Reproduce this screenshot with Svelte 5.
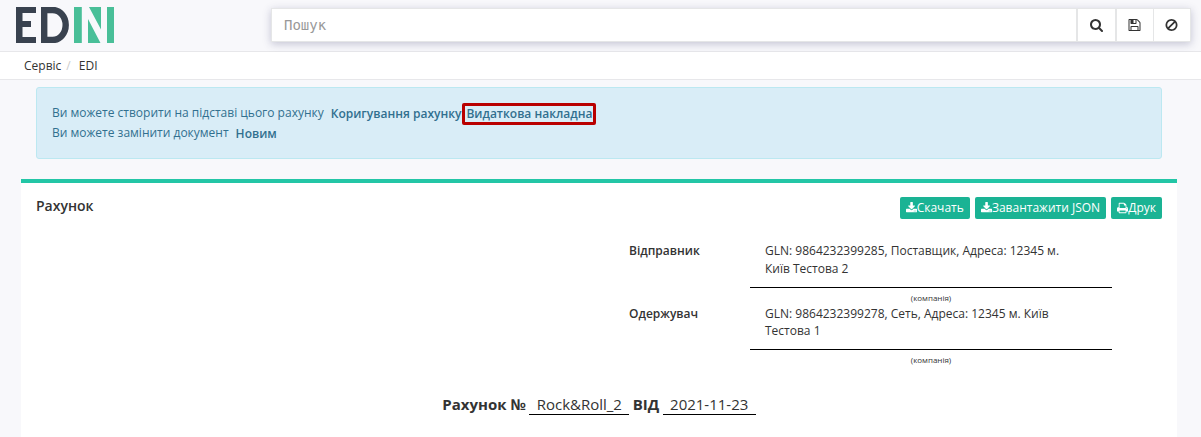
<script>
  const search = "M1216 832q0-185-131.5-316.5t-316.5-131.5-316.5 131.5-131.5 316.5 131.5 316.5 316.5 131.5 316.5-131.5 131.5-316.5zm512 832q0 52-38 90t-90 38q-54 0-90-38l-343-342q-179 124-399 124-143 0-273.5-55.5t-225-150-150-225-55.5-273.5 55.5-273.5 150-225 225-150 273.5-55.5 273.5 55.5 225 150 150 225 55.5 273.5q0 220-124 399l343 343q37 37 37 90z";
  const save = "M512 1536h768v-384h-768v384zm896 0h128v-896q0-14-10-38.5t-20-34.5l-281-281q-10-10-34-20t-39-10v416q0 40-28 68t-68 28h-576q-40 0-68-28t-28-68v-416h-128v1280h128v-416q0-40 28-68t68-28h832q40 0 68 28t28 68v416zm-384-928v-320q0-13-9.5-22.5t-22.5-9.5h-192q-13 0-22.5 9.5t-9.5 22.5v320q0 13 9.5 22.5t22.5 9.5h192q13 0 22.5-9.5t9.5-22.5zm640 32v928q0 40-28 68t-68 28h-1344q-40 0-68-28t-28-68v-1344q0-40 28-68t68-28h928q40 0 88 20t76 48l280 280q28 28 48 76t20 88z";
  const ban = "M1440 893q0-161-87-295l-754 753q137 89 297 89 111 0 211.5-43.5t173.5-116.5 116-174.5 43-212.5zm-999 299l755-754q-135-91-300-91-148 0-273 73t-198 199-73 274q0 162 89 299zm1223-299q0 157-61 300t-163.5 246-245 164-298.5 61-298.5-61-245-164-163.5-246-61-300 61-299.5 163.5-245.5 245-164 298.5-61 298.5 61 245 164 163.5 245.5 61 299.5z";
  const download = "M1344 1344q0-26-19-45t-45-19-45 19-19 45 19 45 45 19 45-19 19-45zm256 0q0-26-19-45t-45-19-45 19-19 45 19 45 45 19 45-19 19-45zm128-224v320q0 40-28 68t-68 28h-1472q-40 0-68-28t-28-68v-320q0-40 28-68t68-28h465l135 136q58 56 136 56t136-56l136-136h464q40 0 68 28t28 68zm-325-569q17 41-14 70l-448 448q-18 19-45 19t-45-19l-448-448q-31-29-14-70 17-39 59-39h256v-448q0-26 19-45t45-19h256q26 0 45 19t19 45v448h256q42 0 59 39z";
  const print = "M448 1536h896v-256h-896v256zm0-640h896v-384h-160q-40 0-68-28t-28-68v-160h-640v640zm1152 64q0-26-19-45t-45-19-45 19-19 45 19 45 45 19 45-19 19-45zm128 0v416q0 13-9.5 22.5t-22.5 9.5h-224v160q0 40-28 68t-68 28h-960q-40 0-68-28t-28-68v-160h-224q-13 0-22.5-9.5t-9.5-22.5v-416q0-79 56.5-135.5t135.5-56.5h64v-544q0-40 28-68t68-28h672q40 0 88 20t76 48l152 152q28 28 48 76t20 88v256h64q79 0 135.5 56.5t56.5 135.5z";
  const actions = [
    { icon: download, label: "Скачать" },
    { icon: download, label: "Завантажити JSON" },
    { icon: print, label: "Друк" },
  ];
  const parties = [
    { role: "Відправник", text: "GLN: 9864232399285, Поставщик, Адреса: 12345 м. Київ Тестова 2" },
    { role: "Одержувач", text: "GLN: 9864232399278, Сеть, Адреса: 12345 м. Київ Тестова 1" },
  ];
</script>

{#snippet icon(d, size)}
  <svg class="icon" width={size * 13 / 14} height={size} viewBox="64 0 1664 1792" fill="currentColor" aria-hidden="true"><path {d} /></svg>
{/snippet}

<div class="page">
  <header class="top">
    <svg class="logo" width="98" height="36" viewBox="0 0 98 36" aria-hidden="true">
      <g fill="#39424f">
        <rect width="6.500" height="36" />
        <rect width="20" height="6" />
        <rect y="14" width="15" height="6" />
        <rect y="30" width="20" height="6" />
      </g>
      <path d="M28.200 3h8.500a13 15 0 0 1 0 30h-8.500z" fill="none" stroke="#39424f" stroke-width="6.400" />
      <g fill="#49bf98">
        <rect x="58" width="7.800" height="36" />
        <rect x="91" width="7" height="36" />
        <path d="M73 0h12v22.500zM72 12v24h12.500z" />
      </g>
    </svg>
    <div class="search">
      <input placeholder="Пошук" />
      <button class="find">{@render icon(search, 14)}</button>
      <button class="save">{@render icon(save, 14)}</button>
      <button class="ban">{@render icon(ban, 14)}</button>
    </div>
  </header>
  <nav><span>Сервіс</span><i>/</i><span>EDI</span></nav>
  <div class="notice">
    <div class="line"><span>Ви можете створити на підставі цього рахунку</span><b class="first">Коригування рахунку</b><b class="marked">Видаткова накладна</b></div>
    <div class="line"><span>Ви можете замінити документ</span><b class="first">Новим</b></div>
  </div>
  <main>
    <div class="head">
      <h5>Рахунок</h5>
      <div class="actions">
        {#each actions as a}
          <button>{@render icon(a.icon, 12)}{a.label}</button>
        {/each}
      </div>
    </div>
    <div class="parties">
      {#each parties as p}
        <b>{p.role}</b>
        <div class="company">
          <p>{p.text}</p>
          <small>(компанія)</small>
        </div>
      {/each}
    </div>
    <div class="number"><b>Рахунок №</b><span>Rock&amp;Roll_2</span><b>ВІД</b><span>2021-11-23</span></div>
  </main>
</div>

<style>
  :global(body) { background: #f8f8fb; }
  .page {
    height: 437px;
    overflow: hidden;
    display: flex;
    flex-direction: column;
    font: 12px/18px "Open Sans", sans-serif;
    color: #333;
    background: #f8f8fb;
  }
  .page * { box-sizing: border-box; }
  button { font: inherit; border: 0; padding: 0; display: flex; align-items: center; }
  b, h5 { font-weight: 600; }
  .icon { display: block; flex: none; }
  .top {
    height: 52px;
    flex: none;
    display: flex;
    align-items: flex-start;
    justify-content: space-between;
    padding: 7px 10px 0 16px;
    border-bottom: 1px solid #e7e7ea;
  }
  .search {
    display: flex;
    width: 920px;
    height: 34px;
    margin-top: 1px;
    border: 1px solid #e5e6e7;
    background: #fff;
    box-shadow: 0 2px 8px rgba(60, 60, 110, 0.28);
  }
  input {
    flex: 1;
    min-width: 0;
    border: 0;
    padding: 0 12px;
    font: 14px "DejaVu Sans Mono", monospace;
    background: #fff;
  }
  input::placeholder { color: #999; }
  .search button { justify-content: center; padding-right: 1px; color: #333; background: #fff; border-left: 2px solid #e5e6e7; }
  .search .find { width: 39px; }
  .search .save { width: 38px; }
  .search .ban { width: 37px; border-left-width: 1px; }
  nav {
    height: 28px;
    flex: none;
    display: flex;
    align-items: center;
    padding: 0 24px;
    background: #fff;
    border-bottom: 1px solid #e7e7ea;
  }
  nav i { font-style: normal; color: #ccc; width: 17.500px; padding-left: 5px; }
  .notice {
    height: 72px;
    flex: none;
    margin: 7px 39px 0 36px;
    padding: 15px;
    border: 1px solid #bce8f1;
    border-radius: 3px;
    background: #d9edf7;
    color: #31708f;
    line-height: 20px;
  }
  .line { display: flex; height: 20px; }
  .line b { position: relative; top: 1px; }
  .first { margin-left: 7px; }
  .marked { height: 22px; margin: -1px 0 0 1px; padding: 0 1px; border: 3px solid #b90000; border-radius: 2px; line-height: 16px; }
  main {
    flex: 1;
    margin: 20px 24px 0 21px;
    border-top: 4px solid #23c6a6;
    background: #fff;
  }
  .head { display: flex; justify-content: space-between; padding: 14px 15px 0; height: 59px; }
  h5 { margin: 0; font-size: 14px; line-height: 18px; }
  .actions { display: flex; gap: 5px; height: 22px; }
  .actions button { padding: 0 6px; color: #fff; background: #1ab394; border-radius: 2px; }
  .parties {
    display: grid;
    grid-template-columns: 121px 362px;
    grid-template-rows: 63px 62px;
    padding: 0 0 0 608px;
  }
  .company { display: flex; flex-direction: column; }
  .company p { margin: 0; flex: none; height: 46px; padding: 0 40px 0 15px; line-height: 18px; border-bottom: 1px solid #000; }
  .company:last-child p { height: 45px; line-height: 17px; }
  .company small { text-align: center; font-size: 8px; line-height: 20px; }
  .number { display: flex; justify-content: center; padding-top: 27px; font-size: 15px; line-height: 20px; }
  .number b { font-weight: 700; }
  .number span { margin: 0 3.500px; padding: 0 7.300px; height: 21px; border-bottom: 1px solid #000; }
  .number span:last-child { margin-right: 0; }
</style>
